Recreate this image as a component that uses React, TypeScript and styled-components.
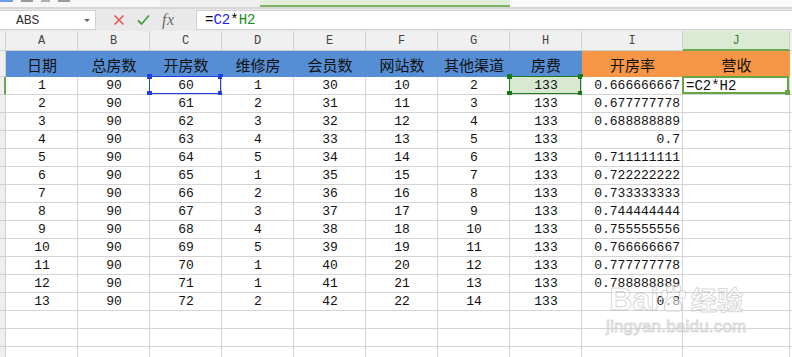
import React from "react";
import styled, { createGlobalStyle } from "styled-components";

const GlobalStyle = createGlobalStyle`
  html, body { margin: 0; padding: 0; background: #ffffff; overflow: hidden; }
  body { font-family: "Liberation Mono", "Noto Sans CJK SC", monospace; }
`;

const COLS = ["A", "B", "C", "D", "E", "F", "G", "H", "I", "J"];
const HEADERS = ["日期", "总房数", "开房数", "维修房", "会员数", "网站数", "其他渠道", "房费", "开房率", "营收"];
const REPAIR = [1, 2, 3, 4, 5, 1, 2, 3, 4, 5, 1, 1, 2];

const formatRate = (v: number) => v.toFixed(9).replace(/0+$/, "").replace(/\.$/, "");

const rows = REPAIR.map((d, i) => {
  const n = i + 1;
  const open = 59 + n;
  return [n, 90, open, d, 29 + n, 9 + n, 1 + n, 133, formatRate(open / 90)];
});

const Page = styled.div`
  position: relative;
  width: 792px;
  height: 357px;
  overflow: hidden;
  background: #ffffff;
`;

const TopStrip = styled.div`
  height: 7px;
  display: flex;
  background: #f7f7f7;
  border-bottom: 2px solid #d6d6d6;
`;

const StripIcons = styled.div`
  width: 160px;
  display: flex;
  gap: 8px;
`;

const StripMark = styled.span<{ $w: number; $c: string }>`
  width: ${({ $w }) => $w}px;
  height: 2px;
  background: ${({ $c }) => $c};
`;

const StripPane = styled.div<{ $w: string; $bg: string; $line?: string }>`
  width: ${({ $w }) => $w};
  flex: ${({ $w }) => ($w === "auto" ? 1 : "none")};
  background: ${({ $bg }) => $bg};
  box-sizing: border-box;
  border-bottom: ${({ $line }) => ($line ? `2px solid ${$line}` : "none")};
`;

const FormulaBar = styled.div`
  height: 22px;
  display: flex;
  align-items: center;
  background: #e9e9e9;
`;

const NameBox = styled.div`
  width: 96px;
  height: 20px;
  box-sizing: border-box;
  background: #ffffff;
  border: 1px solid #d0d0d0;
  border-left: none;
  display: flex;
  align-items: center;
  justify-content: space-between;
  padding: 0 5px 0 16px;
  font-size: 13px;
  color: #333333;
`;

const DropArrow = styled.span`
  width: 0;
  height: 0;
  border-left: 3px solid transparent;
  border-right: 3px solid transparent;
  border-top: 3px solid #666666;
`;

const FormulaIcons = styled.div`
  width: 100px;
  display: flex;
  align-items: center;
  padding-left: 17px;
  gap: 12px;
  box-sizing: border-box;
`;

const Fx = styled.span`
  font-family: "Liberation Serif", serif;
  font-style: italic;
  font-size: 16px;
  color: #6b6b6b;
  letter-spacing: 0.5px;
`;

const FormulaInput = styled.div`
  flex: 1;
  height: 20px;
  box-sizing: border-box;
  background: #ffffff;
  border: 1px solid #d0d0d0;
  border-right: none;
  display: flex;
  align-items: center;
  padding-left: 8px;
  font-size: 14px;
  color: #000000;
`;

const Ref = styled.span<{ $c: string }>`
  color: ${({ $c }) => $c};
`;

const Grid = styled.div`
  display: grid;
  grid-template-columns: 6px repeat(8, 72px) 101px 107px 1fr;
  grid-template-rows: 20px 26px;
  grid-auto-rows: 18px;
`;

const ColHead = styled.div<{ $active?: boolean }>`
  box-sizing: border-box;
  display: flex;
  align-items: center;
  justify-content: center;
  font-size: 12px;
  background: ${({ $active }) => ($active ? "#dbead3" : "#f0f0f0")};
  border-right: 1px solid #d0d0d0;
  border-bottom: ${({ $active }) => ($active ? "2px solid #6aa84f" : "1px solid #cfcfcf")};
  padding-top: 1px;
  color: ${({ $active }) => ($active ? "#3d7a2a" : "#444444")};
`;

const RowHead = styled.div<{ $active?: boolean }>`
  box-sizing: border-box;
  background: #efefef;
  border-bottom: 1px solid #d0d0d0;
  border-right: ${({ $active }) => ($active ? "2px solid #6aa84f" : "1px solid #d0d0d0")};
`;

const Title = styled.div<{ $bg: string }>`
  box-sizing: border-box;
  background: ${({ $bg }) => $bg};
  display: flex;
  align-items: center;
  justify-content: center;
  font-family: "Noto Sans CJK SC", sans-serif;
  font-size: 15px;
  color: #111111;
`;

const Cell = styled.div<{ $align?: "center" | "right" | "left"; $bg?: string }>`
  position: relative;
  box-sizing: border-box;
  border-right: 1px solid #d4d4d4;
  border-bottom: 1px solid #d4d4d4;
  background: ${({ $bg }) => $bg || "#ffffff"};
  display: flex;
  align-items: center;
  justify-content: ${({ $align }) =>
    $align === "right" ? "flex-end" : $align === "left" ? "flex-start" : "center"};
  padding: 0 2px 0 3px;
  font-size: 13px;
  color: #111111;
  white-space: nowrap;
`;

const Selection = styled.div<{ $c: string; $w: number }>`
  position: absolute;
  left: -1px;
  top: -1px;
  right: 0;
  bottom: 0;
  border: ${({ $w, $c }) => `${$w}px solid ${$c}`};
  pointer-events: none;
`;

const Handle = styled.span<{ $c: string; $pos: string }>`
  position: absolute;
  width: 5px;
  height: 5px;
  background: ${({ $c }) => $c};
  ${({ $pos }) => $pos}
`;

const EditText = styled.span`
  position: relative;
  z-index: 1;
  font-size: 14px;
`;

const Watermark = styled.div`
  position: absolute;
  left: 606px;
  top: 284px;
  display: flex;
  flex-direction: column;
  align-items: center;
  color: rgba(255, 255, 255, 0.55);
  -webkit-text-stroke: 1px rgba(165, 165, 165, 0.45);
  pointer-events: none;
`;

const LogoLine = styled.div`
  display: flex;
  align-items: center;
  font-family: "Liberation Sans", sans-serif;
  font-weight: bold;
  font-size: 32px;
  line-height: 30px;
`;

const LogoCjk = styled.span`
  font-family: "Noto Sans CJK SC", sans-serif;
  font-size: 26px;
  margin-left: 4px;
  font-weight: 700;
`;

const Domain = styled.div`
  font-family: "Liberation Sans", sans-serif;
  font-size: 17px;
  margin-top: 3px;
  letter-spacing: 0.2px;
`;

const Paw = () => (
  <svg width="28" height="30" viewBox="0 0 26 28">
    <g fill="rgba(255,255,255,0.55)" stroke="rgba(165,165,165,0.45)" strokeWidth="1">
      <ellipse cx="5" cy="10" rx="3" ry="4" />
      <ellipse cx="10" cy="4" rx="3" ry="3.5" />
      <ellipse cx="17" cy="4" rx="3" ry="3.5" />
      <ellipse cx="22" cy="10" rx="3" ry="4" />
      <path d="M13 12 C8 12 4 19 5 23 C6 27 11 25 13 25 C15 25 20 27 21 23 C22 19 18 12 13 12 Z" />
    </g>
  </svg>
);

const CrossIcon = () => (
  <svg width="12" height="12" viewBox="0 0 12 12">
    <path d="M1.5 1.5 L10.5 10.5 M10.5 1.5 L1.5 10.5" stroke="#e05a5a" strokeWidth="1.6" />
  </svg>
);

const CheckIcon = () => (
  <svg width="13" height="12" viewBox="0 0 13 12">
    <path d="M1 6.5 L4.5 10 L12 1.5" fill="none" stroke="#43a047" strokeWidth="1.8" />
  </svg>
);

const corner = (c: string) => (
  <>
    <Handle $c={c} $pos="left: -3px; top: -3px;" />
    <Handle $c={c} $pos="right: -3px; top: -3px;" />
    <Handle $c={c} $pos="left: -3px; bottom: -3px;" />
    <Handle $c={c} $pos="right: -3px; bottom: -3px;" />
  </>
);

export default function App() {
  const empty = [0, 1, 2];
  return (
    <Page>
      <GlobalStyle />
      <TopStrip>
        <StripIcons>
          <StripMark $w={13} $c="#6d9ee8" />
          <StripMark $w={12} $c="#9a9a9a" />
          <StripMark $w={9} $c="#b0b0b0" />
          <StripMark $w={12} $c="#9a9a9a" />
        </StripIcons>
        <StripPane $w="100px" $bg="#efefef" />
        <StripPane $w="250px" $bg="#e2efda" $line="#7cb364" />
        <StripPane $w="auto" $bg="#fafafa" />
      </TopStrip>
      <FormulaBar>
        <NameBox>
          ABS
          <DropArrow />
        </NameBox>
        <FormulaIcons>
          <CrossIcon />
          <CheckIcon />
          <Fx>fx</Fx>
        </FormulaIcons>
        <FormulaInput>
          =<Ref $c="#1a1aff">C2</Ref>*<Ref $c="#1a8a1a">H2</Ref>
        </FormulaInput>
      </FormulaBar>
      <Grid>
        <ColHead />
        {COLS.map((c) => (
          <ColHead key={c} $active={c === "J"}>
            {c}
          </ColHead>
        ))}
        <ColHead />

        <RowHead />
        {HEADERS.map((h, i) => (
          <Title key={h} $bg={i >= 8 ? "#f79646" : "#558ed5"}>
            {h}
          </Title>
        ))}
        <Title $bg="#ffffff" />

        {rows.map((r, ri) => (
          <React.Fragment key={ri}>
            <RowHead $active={ri === 0} />
            {r.map((v, ci) => {
              const isC2 = ri === 0 && ci === 2;
              const isH2 = ri === 0 && ci === 7;
              return (
                <Cell key={ci} $align={ci === 8 ? "right" : "center"} $bg={isH2 ? "#d8e9d0" : undefined}>
                  {v}
                  {isC2 && <Selection $c="#1f3fe0" $w={1}>{corner("#1f3fe0")}</Selection>}
                  {isH2 && <Selection $c="#1e7b1e" $w={1}>{corner("#157a15")}</Selection>}
                </Cell>
              );
            })}
            <Cell $align="left">
              {ri === 0 && (
                <>
                  <EditText>=C2*H2</EditText>
                  <Selection $c="#63a83e" $w={2}>
                    <Handle $c="#63a83e" $pos="right: -3px; bottom: -3px;" />
                  </Selection>
                </>
              )}
            </Cell>
            <Cell />
          </React.Fragment>
        ))}

        {empty.map((e) => (
          <React.Fragment key={`e${e}`}>
            <RowHead />
            {COLS.map((c) => (
              <Cell key={c} />
            ))}
            <Cell />
          </React.Fragment>
        ))}
      </Grid>
      <Watermark>
        <LogoLine>
          Bai
          <Paw />
          <LogoCjk>经验</LogoCjk>
        </LogoLine>
        <Domain>jingyan.baidu.com</Domain>
      </Watermark>
    </Page>
  );
}
